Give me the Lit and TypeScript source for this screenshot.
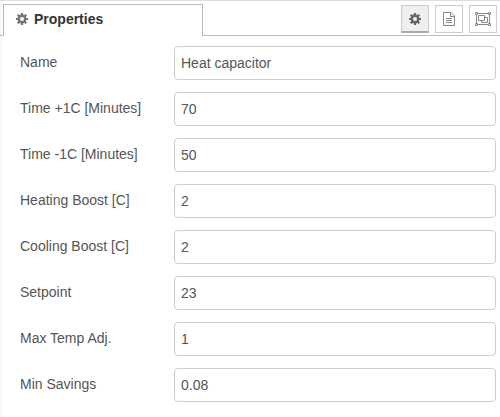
import { LitElement, html, css } from "lit";
import { customElement } from "lit/decorators.js";

const cog = html`<svg class="cog" width="12" height="12" viewBox="0 0 12 12" fill="none" stroke="currentColor">
  <circle cx="6" cy="6" r="3.250" stroke-width="2.500"/>
  <path stroke-width="2.200" d="M6 0V2.500M6 9.500V12M0 6H2.500M9.500 6H12M1.700 1.700L3.400 3.400M8.600 8.600L10.300 10.300M10.300 1.700L8.600 3.400M3.400 8.600L1.700 10.300"/>
</svg>`;

const fileText = html`<svg width="12" height="14" viewBox="0 0 12 14" fill="none" stroke="currentColor">
  <path d="M.5 .5H8L11.500 4V13.500H.5ZM7.500 .5V4.500H11.500M3 6.500H9M3 8.500H9M3 10.500H9"/>
</svg>`;

const objectGroup = html`<svg width="16" height="14" viewBox="0 0 16 14" fill="none" stroke="currentColor">
  <path d="M3 1.500H13M3 12.500H13M1.500 3V11M14.500 3V11"/>
  <path d="M.5 .5H2.500V2.500H.5ZM13.500 .5H15.500V2.500H13.500ZM.5 11.500H2.500V13.500H.5ZM13.500 11.500H15.500V13.500H13.500Z"/>
  <path d="M3.500 3.500H9.500V8.500H3.500ZM9.500 5.500H12.500V10.500H6.500V8.500"/>
</svg>`;

const fields = [
  ["Name", "Heat capacitor"],
  ["Time +1C [Minutes]", "70"],
  ["Time -1C [Minutes]", "50"],
  ["Heating Boost [C]", "2"],
  ["Cooling Boost [C]", "2"],
  ["Setpoint", "23"],
  ["Max Temp Adj.", "1"],
  ["Min Savings", "0.08"],
];

@customElement("app-root")
export class AppRoot extends LitElement {
  static styles = css`
    :host {
      display: block;
      box-sizing: border-box;
      height: 417px;
      overflow: hidden;
      border-top: 1px solid #ddd;
      background: linear-gradient(to right, #f5f5f5, #fff 3px);
      color: #555;
      font: 14px/20px "Liberation Sans", Arial, sans-serif;
    }
    * { box-sizing: border-box; }
    svg { display: block; flex: none; }
    .header { display: flex; height: 35px; }
    .edge { width: 3px; border-bottom: 1px solid #bbb; }
    .tab {
      display: flex;
      align-items: center;
      gap: 6px;
      width: 200px;
      margin-top: 3px;
      padding: 0 0 3px 12px;
      border: 1px solid #bbb;
      border-bottom: 0;
      background: #fff;
      color: #333;
      font-weight: bold;
    }
    .tab .cog { color: #777; }
    .tools {
      display: flex;
      flex: 1;
      justify-content: flex-end;
      gap: 6px;
      padding: 4px 3px 0 0;
      border-bottom: 1px solid #bbb;
    }
    .tool {
      display: flex;
      align-items: center;
      justify-content: center;
      width: 28px;
      height: 28px;
      padding: 0;
      border: 1px solid #ccc;
      background: #fff;
      color: #888;
    }
    .tool.selected {
      padding-top: 1px;
      border-bottom: 2px solid #aaa;
      background: #efefef;
      color: #666;
    }
    .form {
      display: flex;
      flex-direction: column;
      gap: 12px;
      padding: 10px 4px 0 20px;
    }
    .row { display: flex; height: 34px; }
    .label { width: 154px; padding-top: 6px; }
    .input {
      flex: 1;
      min-width: 0;
      height: 34px;
      margin: 0;
      padding: 0 6px 1px;
      border: 1px solid #ccc;
      border-radius: 4px;
      background: #fff;
      color: #555;
      font: inherit;
    }
  `;

  render() {
    return html`
      <div class="header">
        <div class="edge"></div>
        <div class="tab">${cog}<span>Properties</span></div>
        <div class="tools">
          <button class="tool selected" aria-label="Properties">${cog}</button>
          <button class="tool" aria-label="Description">${fileText}</button>
          <button class="tool" aria-label="Appearance">${objectGroup}</button>
        </div>
      </div>
      <div class="form">
        ${fields.map(([label, value]) => html`
          <label class="row">
            <span class="label">${label}</span>
            <input class="input" type="text" .value=${value} />
          </label>`)}
      </div>
    `;
  }
}
